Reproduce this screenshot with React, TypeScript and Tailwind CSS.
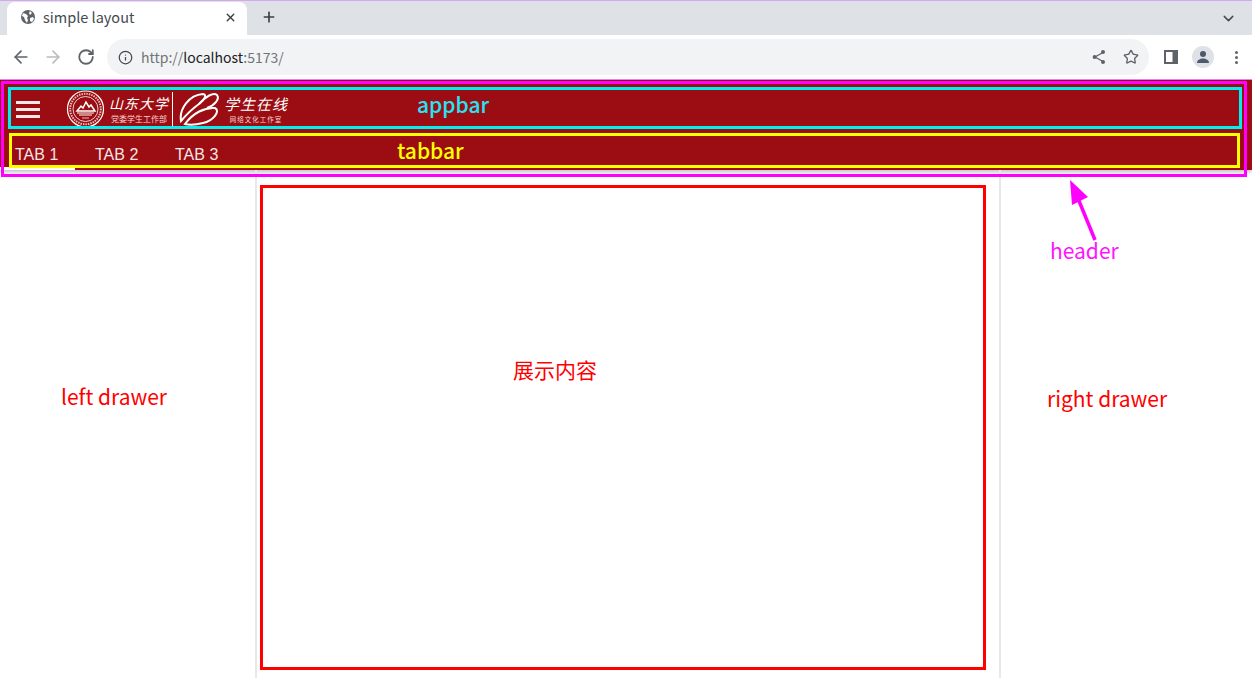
import { ArrowLeft, ArrowRight, ChevronDown, Info, Plus, RotateCw, Star, X } from "lucide-react";

const uiFont = "font-['Noto_Sans_CJK_SC','Noto_Sans',sans-serif]";

function GlobeIcon() {
  return (
    <svg width="16" height="16" viewBox="0 0 16 16" className="shrink-0">
      <circle cx="8" cy="8" r="7" fill="#5f6368" />
      <path d="M3 4l3 1 2 2-1 2 1 2-1 3-2-3-1-3-2-1zM10 2l2 2-2 2-1-2zM10 9l3-1 1 2-2 3-2-1z" fill="#fff" />
    </svg>
  );
}

function ShareIcon() {
  return (
    <svg width="16" height="16" viewBox="0 0 16 16">
      <path d="M12 3.500L4 8l8 4.500" fill="none" stroke="#5f6368" strokeWidth="1.300" />
      <circle cx="12" cy="3" r="2" fill="#5f6368" />
      <circle cx="3.600" cy="8" r="2" fill="#5f6368" />
      <circle cx="12" cy="13" r="2" fill="#5f6368" />
    </svg>
  );
}

function PanelIcon() {
  return (
    <svg width="14" height="14" viewBox="0 0 14 14">
      <rect width="14" height="14" fill="#5f6368" />
      <rect x="2" y="2" width="6.500" height="10" fill="#fff" />
    </svg>
  );
}

function AvatarIcon() {
  return (
    <div className="flex h-[22px] w-[22px] items-center justify-center rounded-full bg-[#dee1e6]">
      <svg width="14" height="14" viewBox="0 0 14 14">
        <circle cx="7" cy="4" r="3" fill="#4d5a6c" />
        <path d="M1 13c0-3 3-4.500 6-4.500s6 1.500 6 4.500z" fill="#4d5a6c" />
      </svg>
    </div>
  );
}

function BrowserChrome() {
  return (
    <div className={`${uiFont} flex h-[80px] flex-col`}>
      <div className="flex h-[35px] items-end border-t border-[#d5a6f2] bg-[#dee1e6]">
        <div className="ml-[7px] flex h-[33px] w-[240px] items-center rounded-t-lg bg-white pb-[3px] pl-[13px] pr-[10px]">
          <GlobeIcon />
          <span className="ml-[7px] flex-1 text-[14.500px] text-[#45494e]">simple layout</span>
          <X size={13} strokeWidth={2.5} color="#3c4043" />
        </div>
        <div className="ml-[14px] flex h-[33px] items-center pb-[3px]">
          <Plus size={16} strokeWidth={2.5} color="#3c4043" />
        </div>
        <div className="ml-auto mr-[15px] flex h-[33px] items-center">
          <ChevronDown size={17} strokeWidth={2} color="#45494e" />
        </div>
      </div>
      <div className="flex h-[45px] items-center border-b border-[#d78aeb] bg-white pl-[11px] pr-[14px]">
        <ArrowLeft size={20} strokeWidth={2} color="#5f6368" />
        <ArrowRight size={20} strokeWidth={2} color="#b9bbbe" className="ml-[12px]" />
        <RotateCw size={18} strokeWidth={2.4} color="#5f6368" className="ml-[14px]" />
        <div className="ml-[12px] flex h-[36px] flex-1 items-center rounded-full bg-[#f1f3f4] pl-[11px] pr-[10px]">
          <Info size={15} strokeWidth={2} color="#45494e" />
          <span className="ml-[8px] text-sm text-[#70757a]">
            http://<span className="text-[#202124]">localhost</span>:5173/
          </span>
          <div className="ml-auto flex items-center gap-[16px]">
            <ShareIcon />
            <Star size={16} strokeWidth={2} color="#5f6368" />
          </div>
        </div>
        <div className="ml-[15px] flex items-center">
          <PanelIcon />
          <div className="ml-[14px]">
            <AvatarIcon />
          </div>
          <div className="ml-[21px] flex w-[3px] flex-col gap-[2px]">
            <span className="h-[3px] w-[3px] rounded-full bg-[#5f6368]" />
            <span className="h-[3px] w-[3px] rounded-full bg-[#5f6368]" />
            <span className="h-[3px] w-[3px] rounded-full bg-[#5f6368]" />
          </div>
        </div>
      </div>
    </div>
  );
}

function SchoolLogo() {
  return (
    <div className="flex h-[38px] items-center text-white">
      <svg width="39" height="38" viewBox="0 0 39 38" className="shrink-0">
        <circle cx="19.500" cy="19" r="18" fill="none" stroke="#fff" strokeWidth="1.200" />
        <circle cx="19.500" cy="19" r="12.500" fill="none" stroke="#fff" strokeWidth="0.800" />
        <circle cx="19.500" cy="19" r="15.300" fill="none" stroke="#e8bcbc" strokeWidth="2" strokeDasharray="1.500 1" />
        <path d="M11 21l4-5 2 2 3-6 3 5 2-2 4 6z" fill="none" stroke="#fff" strokeWidth="1.500" />
        <path d="M11 23h17M13 25h13" stroke="#fff" strokeWidth="1" />
        <path d="M16 28h7" stroke="#e8bcbc" strokeWidth="1" />
      </svg>
      <div className="ml-[4px] flex w-[60px] flex-col items-center font-['Noto_Sans_CJK_SC',sans-serif]">
        <span className="text-[14px] leading-[16px] italic tracking-[1px] whitespace-nowrap">山东大学</span>
        <span className="mt-[3px] text-[8px] leading-[9px] whitespace-nowrap text-[#f3d6d6]">党委学生工作部</span>
      </div>
      <div className="ml-[3px] h-[34px] w-px bg-white" />
      <svg width="42" height="36" viewBox="0 0 42 36" className="ml-[6px] shrink-0">
        <path d="M2 30C0 18 10 4 24 3c4 0 2 6-4 10C13 18 7 24 2 30z" fill="none" stroke="#fff" strokeWidth="2" />
        <path d="M6 33c8-11 20-17 30-16 6 3-2 13-12 15-8 2-14 2-18 1z" fill="none" stroke="#fff" strokeWidth="2" />
        <path d="M20 13c6-7 14-12 18-9 3 4-2 10-10 13" fill="none" stroke="#fff" strokeWidth="2" />
      </svg>
      <div className="ml-[2px] flex w-[66px] flex-col items-center font-['Noto_Sans_CJK_SC',sans-serif]">
        <span className="text-[15px] leading-[17px] italic tracking-[1px] whitespace-nowrap">学生在线</span>
        <span className="mt-[3px] text-[6.500px] leading-[8px] tracking-[1px] whitespace-nowrap text-[#f3d6d6]">网络文化工作室</span>
      </div>
    </div>
  );
}

function Header() {
  return (
    <header className="h-[90px] bg-[#9b0d12] shadow-[0_2px_4px_rgba(0,0,0,0.25)]">
      <div className="flex h-[50px] items-center pl-[16px] pt-[8px]">
        <div className="flex w-[24px] flex-col gap-[4px]">
          <span className="h-[3px] bg-[#f6e6e6]" />
          <span className="h-[3px] bg-[#f6e6e6]" />
          <span className="h-[3px] bg-[#f6e6e6]" />
        </div>
        <div className="ml-[26px]">
          <SchoolLogo />
        </div>
      </div>
      <div className="flex h-[40px] font-['Liberation_Sans',sans-serif] text-base text-[#f7e6e6]">
        <div className="flex w-[75px] flex-col justify-end">
          <span className="pl-[15px] leading-[24px]">TAB 1</span>
          <span className="h-[3px] bg-white" />
        </div>
        <div className="flex w-[80px] flex-col justify-end pb-[3px] pl-[20px] leading-[24px]">TAB 2</div>
        <div className="flex w-[80px] flex-col justify-end pb-[3px] pl-[20px] leading-[24px]">TAB 3</div>
      </div>
    </header>
  );
}

function Annotations() {
  return (
    <div className="pointer-events-none absolute inset-0 font-['Noto_Sans_CJK_SC','Noto_Sans',sans-serif] text-[21px]">
      <div className="absolute left-[1px] top-[81px] h-[96px] w-[1246px] border-[3px] border-[#ff00ff]" />
      <div className="absolute left-[8px] top-[87px] h-[42px] w-[1234px] border-[3px] border-[#00f0f0]" />
      <div className="absolute left-[9px] top-[133px] h-[35px] w-[1231px] border-[3px] border-[#ffff00]" />
      <div className="absolute left-[260px] top-[185px] h-[485px] w-[726px] border-[3px] border-[#ff0000]" />
      <span className="absolute left-[417px] top-[90px] font-medium leading-[28px] text-[#22e5f5]">appbar</span>
      <span className="absolute left-[397px] top-[136px] font-medium leading-[28px] text-[#ffff00]">tabbar</span>
      <span className="absolute left-[1050px] top-[236px] leading-[28px] text-[#ff14ff]">header</span>
      <span className="absolute left-[513px] top-[355px] leading-[28px] text-[#ff0000]">展示内容</span>
      <span className="absolute left-[61px] top-[382px] leading-[28px] text-[#ff0000]">left drawer</span>
      <span className="absolute left-[1047px] top-[384px] leading-[28px] text-[#ff0000]">right drawer</span>
      <svg width="40" height="70" viewBox="0 0 40 70" className="absolute left-[1062px] top-[176px]">
        <path d="M33 64L15 20" stroke="#ff00ff" strokeWidth="3.500" fill="none" />
        <path d="M8 4l2 25 16-8z" fill="#ff00ff" />
      </svg>
    </div>
  );
}

export default function App() {
  return (
    <div className="relative h-[678px] w-[1252px] overflow-hidden bg-white">
      <BrowserChrome />
      <Header />
      <div className="flex h-[508px]">
        <aside className="w-[257px] shrink-0 border-r-2 border-[#e8e8e8]" />
        <main className="flex-1" />
        <aside className="w-[253px] shrink-0 border-l-2 border-[#e8e8e8]" />
      </div>
      <Annotations />
    </div>
  );
}
